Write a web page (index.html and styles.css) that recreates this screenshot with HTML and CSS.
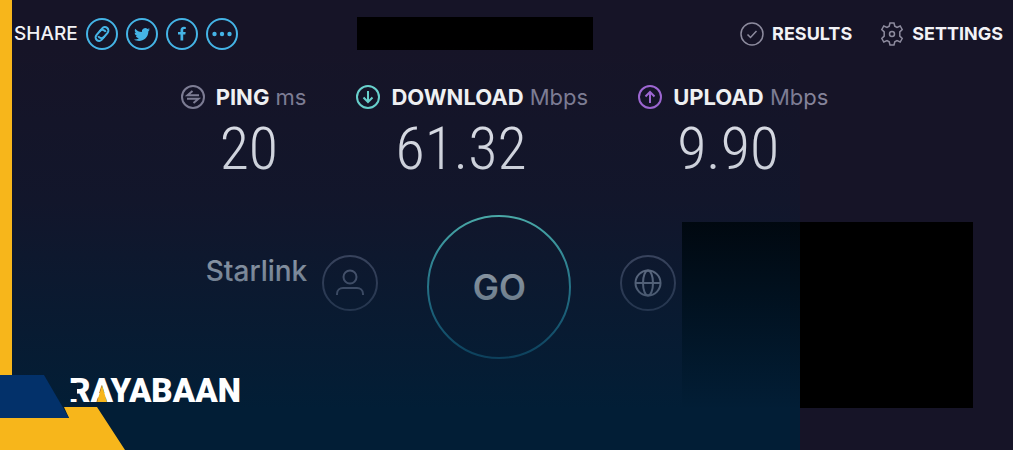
FILE: index.html
```html
<!DOCTYPE html>
<html lang="en">
<head>
    <meta charset="UTF-8">
    <meta name="viewport" content="width=device-width, initial-scale=1.0">
    <title>Speed test - Starlink</title>
    <link rel="stylesheet" href="styles.css">
</head>
<body>

<div class="page">
    <header class="topbar">
        <div class="share">
            <span class="share-label">SHARE</span>
            <a class="share-link" href="#link" aria-label="Copy link">
                <svg viewBox="0 0 32 32"><circle cx="16" cy="16" r="15"/><g transform="rotate(-50 16 16)"><path d="M15.500 19.500h-4a3.500 3.500 0 0 1 0-7h5.500a3.500 3.500 0 0 1 3 5"/><path d="M16.500 12.500h4a3.500 3.500 0 0 1 0 7h-5.500a3.500 3.500 0 0 1-3-5"/></g></svg>
            </a>
            <a class="share-link" href="#twitter" aria-label="Twitter">
                <svg viewBox="0 0 32 32"><circle cx="16" cy="16" r="15"/><path class="solid" d="M24 11.500l-1.800.5c.7-.4 1.100-1 1.300-1.700l-2 .8a3.300 3.300 0 0 0-5.600 3c-2.700-.1-5.100-1.400-6.700-3.400-.9 1.500-.4 3.400 1 4.400l-1.500-.4c0 1.600 1.100 2.900 2.600 3.200h-1.400c.4 1.300 1.600 2.200 3 2.300A6.500 6.500 0 0 1 8 21.500c5.700 3.600 14.200.4 14.400-8.200z"/></svg>
            </a>
            <a class="share-link" href="#facebook" aria-label="Facebook">
                <svg viewBox="0 0 32 32"><circle cx="16" cy="16" r="15"/><path class="solid" d="M14.500 22.500v-6h-2.500v-2.400h2.500v-1.800c0-2.300 1.300-3.500 3.400-3.500l1.900.1v2.200h-1.300c-1 0-1.300.5-1.300 1.300v1.700h2.500l-.4 2.400h-2.100v6z"/></svg>
            </a>
            <a class="share-link" href="#more" aria-label="More">
                <svg viewBox="0 0 32 32"><circle cx="16" cy="16" r="15"/><g class="solid"><circle cx="8.500" cy="16" r="2.200"/><circle cx="16" cy="16" r="2.200"/><circle cx="23.500" cy="16" r="2.200"/></g></svg>
            </a>
        </div>
        <div class="top-block"></div>
        <nav class="menu">
            <a href="#results">
                <svg viewBox="0 0 24 24"><circle cx="12" cy="12" r="11"/><path d="M7.500 12.500l3 3 6-6.500"/></svg>
                RESULTS
            </a>
            <a href="#settings">
                <svg viewBox="0 0 24 24"><path d="M10 1h4l.8 3.200 2.200 1.200 3.200-1.400 2 3.500-2.400 2.400v4.200l2.400 2.400-2 3.500-3.200-1.400-2.200 1.200L14 23h-4l-.8-3.200L7 18.600 3.800 20l-2-3.500 2.400-2.400V9.900L1.800 7.500l2-3.500L7 5.400l2.200-1.200z"/><circle cx="12" cy="12" r="2.500"/></svg>
                SETTINGS
            </a>
        </nav>
    </header>

    <section class="metrics">
        <div class="metric">
            <div class="metric-title">
                <svg class="ping" viewBox="0 0 24 24"><circle cx="12" cy="12" r="11"/><path d="M18 10.300H6.500l5-4.300M6 13.700h11.500l-5 4.300"/></svg>
                <span><b>PING</b> ms</span>
            </div>
            <div class="metric-value">20</div>
        </div>
        <div class="metric">
            <div class="metric-title">
                <svg class="download" viewBox="0 0 24 24"><circle cx="12" cy="12" r="11"/><path d="M12 6v11M7.500 12.500l4.500 4.500 4.500-4.500"/></svg>
                <span><b>DOWNLOAD</b> Mbps</span>
            </div>
            <div class="metric-value">61.32</div>
        </div>
        <div class="metric">
            <div class="metric-title">
                <svg class="upload" viewBox="0 0 24 24"><circle cx="12" cy="12" r="11"/><path d="M12 18V7M7.500 11.500L12 7l4.500 4.500"/></svg>
                <span><b>UPLOAD</b> Mbps</span>
            </div>
            <div class="metric-value">9.90</div>
        </div>
    </section>

    <section class="test">
        <div class="host">
            <span class="host-name">Starlink</span>
            <svg class="host-icon" viewBox="0 0 56 56"><circle cx="28" cy="28" r="27"/><g class="glyph"><circle cx="28" cy="22" r="6.500"/><path d="M15 40v-1c0-4 3-6 6-6h14c3 0 6 2 6 6v1"/></g></svg>
        </div>
        <button class="go" type="button">
            <svg viewBox="0 0 144 144">
                <defs>
                    <linearGradient id="ring" x1="0" y1="0" x2="0" y2="1">
                        <stop offset="0" stop-color="#62d8cc"/>
                        <stop offset="1" stop-color="#38c8f0"/>
                    </linearGradient>
                </defs>
                <circle cx="72" cy="72" r="71" stroke="url(#ring)"/>
            </svg>
            <span>GO</span>
        </button>
        <div class="server">
            <svg class="host-icon" viewBox="0 0 56 56"><circle cx="28" cy="28" r="27"/><g class="glyph bright"><circle cx="28" cy="28" r="12.500"/><ellipse cx="28" cy="28" rx="5" ry="12.500"/><path d="M15.500 28h25"/></g></svg>
            <div class="server-block"></div>
        </div>
    </section>

    <div class="shade"></div>

    <div class="side-bar"></div>
    <svg class="corner" viewBox="0 0 126 75">
        <path fill="#f7b61b" d="M0 43h69l-5-11h33l28 43H0z"/>
        <path fill="#03316a" d="M0 0h44l25 43H0z"/>
    </svg>
    <div class="brand">
        <span>RAYABAAN</span>
        <!-- cut in the stem of the R, wedge inside the first A -->
        <svg viewBox="0 0 40 24"><path fill="#031c34" d="M0 4h7v16H0z"/><path fill="#f7b61b" d="M32 6l5 17H27z"/></svg>
    </div>
</div>

</body>
</html>
```
FILE: styles.css
```css
* {
    box-sizing: border-box;
}
body {
    margin: 0;
    background-color: #161427;
    color: #f2f2f6;
    font-family: Inter, "Open Sans", sans-serif;
}
svg {
    display: block;
    flex: none;
    fill: none;
    stroke: currentColor;
    stroke-width: 2;
}
a {
    color: inherit;
    text-decoration: none;
}
.page {
    position: relative;
    min-height: 100vh;
    padding: 17px 10px 0 14px;
    overflow: hidden;
}
.topbar {
    display: flex;
    align-items: center;
}
.share {
    display: flex;
    align-items: center;
    gap: 8px;
}
.share-label {
    font-size: 19px;
    font-weight: 500;
}
.share-link {
    color: #45b4e6;
}
.share-link svg {
    width: 32px;
    height: 32px;
}
.solid {
    fill: currentColor;
    stroke: none;
}
.top-block {
    width: 236px;
    height: 33px;
    margin-left: 119px;
    background-color: #000;
}
.menu {
    display: flex;
    gap: 28px;
    margin-left: auto;
    font-size: 18px;
    font-weight: 700;
}
.menu a {
    display: flex;
    align-items: center;
    gap: 8px;
}
.menu svg {
    width: 24px;
    height: 24px;
    color: #8d8b9e;
    stroke-width: 1.5;
}
.metrics {
    display: flex;
    justify-content: center;
    gap: 50px;
    margin-top: 33px;
    padding-right: 8px;
}
.metric-title {
    display: flex;
    align-items: center;
    gap: 11px;
    color: #85839a;
    font-size: 22px;
    line-height: 28px;
}
.metric-title b {
    color: #fff;
    font-weight: 700;
}
.metric-title svg {
    width: 24px;
    height: 24px;
}
.metric-title .ping {
    color: #85839a;
}
.metric-title .download {
    color: #6fdcd6;
}
.metric-title .upload {
    color: #a76bdc;
}
.metric-value {
    padding-left: 39px;
    color: #f0f0f6;
    font-family: "Roboto Condensed", "Liberation Sans Narrow", Roboto, sans-serif;
    font-size: 60px;
    font-weight: 300;
    line-height: 75px;
}
.test {
    display: flex;
    justify-content: center;
    align-items: flex-start;
    gap: 49px;
    margin-top: 29px;
    padding-left: 162px;
}
.host,
.server {
    display: flex;
    align-items: flex-start;
}
.host {
    gap: 15px;
    padding-top: 40px;
}
.host-name {
    color: #e8e8f0;
    font-size: 28px;
    font-weight: 500;
    line-height: 32px;
}
.host-icon {
    width: 56px;
    height: 56px;
    color: #5d5c75;
}
.glyph {
    color: #7f7e97;
    stroke: currentColor;
}
.bright {
    color: #a5a6ba;
}
.go {
    display: grid;
    place-items: center;
    width: 144px;
    height: 144px;
    padding: 0;
    border: none;
    background: none;
    color: #fff;
    font-family: inherit;
    font-size: 35px;
    font-weight: 600;
    cursor: pointer;
}
.go svg,
.go span {
    grid-area: 1 / 1;
}
.go svg {
    width: 144px;
    height: 144px;
}
.server {
    gap: 6px;
    padding-top: 7px;
}
.server .host-icon {
    margin-top: 33px;
}
.server-block {
    width: 291px;
    height: 186px;
    background-color: #000;
}
/* blue fade over the left part of the page */
.shade {
    position: absolute;
    top: 0;
    bottom: 0;
    left: 0;
    width: 79%;
    background: linear-gradient(rgba(2, 30, 60, 0) 10%, rgba(2, 30, 60, 0.2) 45%, #021e36 91%);
    pointer-events: none;
}
.side-bar {
    position: absolute;
    top: 0;
    bottom: 75px;
    left: 0;
    width: 12px;
    background-color: #f7b61b;
}
.corner {
    position: absolute;
    bottom: 0;
    left: 0;
    width: 126px;
    height: 75px;
    stroke: none;
}
.brand {
    position: absolute;
    bottom: 42px;
    left: 69px;
    color: #fff;
    font-family: Roboto, sans-serif;
    font-size: 33px;
    font-weight: 900;
    line-height: 34px;
}
.brand svg {
    position: absolute;
    bottom: 5px;
    left: 1px;
    width: 40px;
    height: 24px;
    stroke: none;
}
```
